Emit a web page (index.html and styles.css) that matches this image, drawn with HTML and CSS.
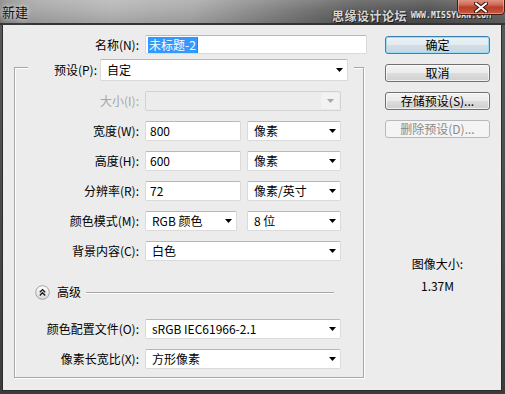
FILE: index.html
```html
<!DOCTYPE html>
<html lang="zh-CN">
<head>
<meta charset="utf-8">
<title>新建</title>
<link rel="stylesheet" href="styles.css">
</head>
<body>
<div class="window">
  <div class="titlebar">
    <span class="title">新建</span>
    <div class="watermark"><span class="wm-cn">思缘设计论坛</span><span class="wm-en">WWW.MISSYUAN.COM</span></div>
    <div class="close">
      <svg width="14" height="11" viewBox="0 0 14 11"><path d="M2 1.5 L12 9.5 M12 1.5 L2 9.5" stroke="#3a0a05" stroke-width="4" stroke-linecap="round"/><path d="M2 1.5 L12 9.5 M12 1.5 L2 9.5" stroke="#fff" stroke-width="2.2" stroke-linecap="round"/></svg>
    </div>
  </div>
  <div class="client">
    <div class="form">
      <div class="name-row">
        <span class="lbl name-lbl">名称(N):</span>
        <div class="field name-field"><span class="sel">未标题-2</span><span class="caret"></span></div>
      </div>
      <div class="group">
        <div class="preset-row">
          <span class="lbl preset-lbl">预设(P):</span>
          <div class="field select preset-sel"><span class="val">自定</span><svg class="arr" width="7" height="4" viewBox="0 0 7 4"><path d="M0 0H7L3.5 4Z"/></svg></div>
        </div>
        <div class="row">
          <span class="lbl row-lbl disabled">大小(I):</span>
          <div class="field select disabled-sel w-full"><span class="val"></span><span class="drop"><svg class="arr" width="7" height="4" viewBox="0 0 7 4"><path d="M0 0H7L3.5 4Z"/></svg></span></div>
        </div>
        <div class="row">
          <span class="lbl row-lbl">宽度(W):</span>
          <div class="field input w-num"><span class="val">800</span></div>
          <div class="field select w-unit"><span class="val">像素</span><svg class="arr" width="7" height="4" viewBox="0 0 7 4"><path d="M0 0H7L3.5 4Z"/></svg></div>
        </div>
        <div class="row">
          <span class="lbl row-lbl">高度(H):</span>
          <div class="field input w-num"><span class="val">600</span></div>
          <div class="field select w-unit"><span class="val">像素</span><svg class="arr" width="7" height="4" viewBox="0 0 7 4"><path d="M0 0H7L3.5 4Z"/></svg></div>
        </div>
        <div class="row">
          <span class="lbl row-lbl">分辨率(R):</span>
          <div class="field input w-num"><span class="val">72</span></div>
          <div class="field select w-unit"><span class="val">像素/英寸</span><svg class="arr" width="7" height="4" viewBox="0 0 7 4"><path d="M0 0H7L3.5 4Z"/></svg></div>
        </div>
        <div class="row">
          <span class="lbl row-lbl">颜色模式(M):</span>
          <div class="field select w-mode"><span class="val">RGB 颜色</span><svg class="arr" width="7" height="4" viewBox="0 0 7 4"><path d="M0 0H7L3.5 4Z"/></svg></div>
          <div class="field select w-unit w-bit"><span class="val">8 位</span><svg class="arr" width="7" height="4" viewBox="0 0 7 4"><path d="M0 0H7L3.5 4Z"/></svg></div>
        </div>
        <div class="row">
          <span class="lbl row-lbl">背景内容(C):</span>
          <div class="field select w-full"><span class="val">白色</span><svg class="arr" width="7" height="4" viewBox="0 0 7 4"><path d="M0 0H7L3.5 4Z"/></svg></div>
        </div>
        <div class="adv-row">
          <svg class="adv-icon" width="15" height="15" viewBox="0 0 15 15">
            <defs><linearGradient id="g" x1="0" y1="0" x2="0" y2="1"><stop offset="0" stop-color="#ffffff"/><stop offset="1" stop-color="#d8d8d8"/></linearGradient></defs>
            <circle cx="7.5" cy="7.5" r="6.8" fill="url(#g)" stroke="#a2a2a2" stroke-width="1"/>
            <path d="M4.8 7.2 L7.5 4.6 L10.2 7.2 M4.8 10.4 L7.5 7.8 L10.2 10.4" fill="none" stroke="#1a1a1a" stroke-width="1.4"/>
          </svg>
          <span class="adv-text">高级</span>
          <span class="adv-line"></span>
        </div>
        <div class="row row-profile">
          <span class="lbl row-lbl">颜色配置文件(O):</span>
          <div class="field select w-full"><span class="val">sRGB IEC61966-2.1</span><svg class="arr" width="7" height="4" viewBox="0 0 7 4"><path d="M0 0H7L3.5 4Z"/></svg></div>
        </div>
        <div class="row">
          <span class="lbl row-lbl">像素长宽比(X):</span>
          <div class="field select w-full"><span class="val">方形像素</span><svg class="arr" width="7" height="4" viewBox="0 0 7 4"><path d="M0 0H7L3.5 4Z"/></svg></div>
        </div>
      </div>
    </div>
    <div class="side">
      <div class="btn default">确定</div>
      <div class="btn">取消</div>
      <div class="btn">存储预设(S)...</div>
      <div class="btn disabled-btn">删除预设(D)...</div>
      <div class="info-title">图像大小:</div>
      <div class="info-val">1.37M</div>
    </div>
  </div>
</div>
</body>
</html>
```
FILE: styles.css
```css
html, body {
  margin: 0;
  padding: 0;
  background: #3a3a3a;
  overflow: hidden;
}

body {
  font-family: "Noto Sans CJK SC", "Microsoft YaHei", sans-serif;
  font-size: 12px;
  color: #000;
}

.window {
  width: 505px;
  height: 394px;
  display: flex;
  flex-direction: column;
  background: linear-gradient(180deg, #5a5a5a 0%, #3c3c3c 100%);
}

.titlebar {
  position: relative;
  height: 23px;
  flex: none;
  border-bottom: 2px solid #333;
  background:
    linear-gradient(180deg, rgba(255,255,255,0.18) 0%, rgba(255,255,255,0.05) 45%, rgba(0,0,0,0.08) 100%),
    linear-gradient(90deg, #7e7e7e 0%, #a3a3a3 7%, #b2b2b2 22%, #a5a5a5 38%, #7b7b7b 55%, #575757 70%, #4c4c4c 85%, #626262 100%);
  display: flex;
  align-items: center;
}

.title {
  padding-left: 2px;
  font-size: 13px;
  line-height: 16px;
  color: #111;
  text-shadow: 0 0 4px #e8e8e8, 0 0 8px #e0e0e0;
}

.watermark {
  position: absolute;
  left: 332px;
  top: 9px;
  display: flex;
  align-items: center;
  gap: 4px;
  white-space: nowrap;
}

.wm-cn {
  font-size: 12px;
  line-height: 14px;
  font-weight: bold;
  color: #d6d6d6;
  letter-spacing: 0.5px;
  text-shadow: 1px 1px 0 #222, -1px 0 0 #333;
}

.wm-en {
  font-family: "DejaVu Sans Mono", monospace;
  font-size: 8px;
  line-height: 10px;
  font-weight: bold;
  color: #e4e4e4;
  letter-spacing: 0.2px;
  text-shadow: 1px 1px 0 #222;
}

.close {
  position: absolute;
  left: 457px;
  top: -2px;
  width: 48px;
  height: 17px;
  box-sizing: border-box;
  border: 1px solid #4a1a12;
  border-radius: 0 0 4px 4px;
  background: linear-gradient(180deg, #e49a8a 0%, #d0705e 35%, #b8402a 55%, #c65a3e 100%);
  box-shadow: inset 0 0 0 1px rgba(255,200,190,0.5);
  display: flex;
  align-items: center;
  justify-content: center;
  padding-top: 2px;
}

.client {
  flex: 1;
  margin: 0 4px 4px 3px;
  background: #ececec;
  display: flex;
  box-shadow: 0 0 0 1px #2c2c2c;
}

.form {
  width: 365px;
  flex: none;
  padding-top: 10px;
}

.lbl {
  line-height: 20px;
  white-space: nowrap;
  text-align: right;
  flex: none;
}

.name-row {
  display: flex;
  height: 19px;
  align-items: center;
}

.name-lbl {
  width: 136px;
}

.field {
  box-sizing: border-box;
  height: 20px;
  background: #fff;
  border: 1px solid #dadada;
  border-top-color: #b8b8b8;
  border-radius: 2px;
  display: flex;
  align-items: center;
  flex: none;
}

.val {
  flex: 1;
  line-height: 18px;
  white-space: nowrap;
  overflow: hidden;
}

.name-field {
  height: 19px;
  width: 222px;
  margin-left: 6px;
  padding-left: 2px;
}

.sel {
  background: #3399ff;
  color: #fff;
  line-height: 16px;
  height: 16px;
  padding: 0 1px;
}

.caret {
  width: 1px;
  height: 16px;
  background: #b8650a;
}

.group {
  box-sizing: border-box;
  margin: 13px 0 0 11px;
  width: 350px;
  height: 311px;
  border: 1px solid #a7a7a7;
  box-shadow: inset 1px 1px 0 #fff, 1px 1px 0 #fff;
}

.preset-row {
  display: flex;
  margin: -9px 0 0 13px;
  width: 326px;
  height: 22px;
  background: #ececec;
}

.preset-lbl {
  width: 69px;
  line-height: 22px;
}

.preset-sel {
  height: 22px;
  width: 248px;
  margin-left: 3px;
  padding-left: 5px;
}

.select {
  padding-left: 6px;
}

.input {
  padding-left: 4px;
}

.arr {
  flex: none;
  margin-right: 4px;
  fill: #000;
}

.row {
  display: flex;
  margin-top: 10px;
  height: 20px;
}

.row-lbl {
  width: 124px;
}

.row .field {
  margin-left: 6px;
}

.row .field.w-unit {
  margin-left: 6px;
}

.row .field.w-bit {
  margin-left: 10px;
}

.disabled {
  color: #a6a6a6;
}

.w-full {
  width: 196px;
}

.w-num {
  width: 96px;
}

.w-unit {
  width: 94px;
}

.w-mode {
  width: 92px;
}

.disabled-sel {
  background: #ececec;
  border-color: #d2d2d2;
  padding-right: 1px;
}

.drop {
  width: 18px;
  height: 16px;
  display: flex;
  align-items: center;
  justify-content: center;
  background: #f2f2f2;
}

.drop .arr {
  margin-right: 0;
  fill: #a8a8a8;
}

.adv-row {
  display: flex;
  align-items: center;
  margin-top: 23px;
  height: 16px;
  padding-left: 20px;
}

.adv-icon {
  flex: none;
}

.adv-text {
  margin-left: 7px;
  line-height: 16px;
}

.adv-line {
  flex: 1;
  height: 1px;
  margin: 0 29px 0 5px;
  background: #a7a7a7;
  box-shadow: 0 1px 0 #fff;
}

.row-profile {
  margin-top: 19px;
}

.side {
  margin-left: 17px;
  width: 105px;
  padding-top: 11px;
  display: flex;
  flex-direction: column;
  align-items: center;
}

.btn {
  box-sizing: border-box;
  width: 105px;
  height: 18px;
  margin-bottom: 10px;
  border: 1px solid #707070;
  border-radius: 3px;
  background: linear-gradient(180deg, #f2f2f2 0%, #ebebeb 48%, #dddddd 52%, #cfcfcf 100%);
  box-shadow: inset 0 0 0 1px rgba(255,255,255,0.7);
  text-align: center;
  line-height: 16px;
  color: #000;
}

.btn.default {
  border-color: #3c7fb1;
  background: linear-gradient(180deg, #edf3f6 0%, #e2eaf0 48%, #d2dee6 52%, #c8d6df 100%);
  box-shadow: inset 0 0 0 1px #9ddcf5;
}

.btn.disabled-btn {
  border-color: #b5b9bc;
  background: #f4f4f4;
  box-shadow: none;
  color: #8a8a8a;
}

.info-title {
  margin-top: 108px;
  line-height: 16px;
}

.info-val {
  margin-top: 6px;
  line-height: 16px;
}
```
